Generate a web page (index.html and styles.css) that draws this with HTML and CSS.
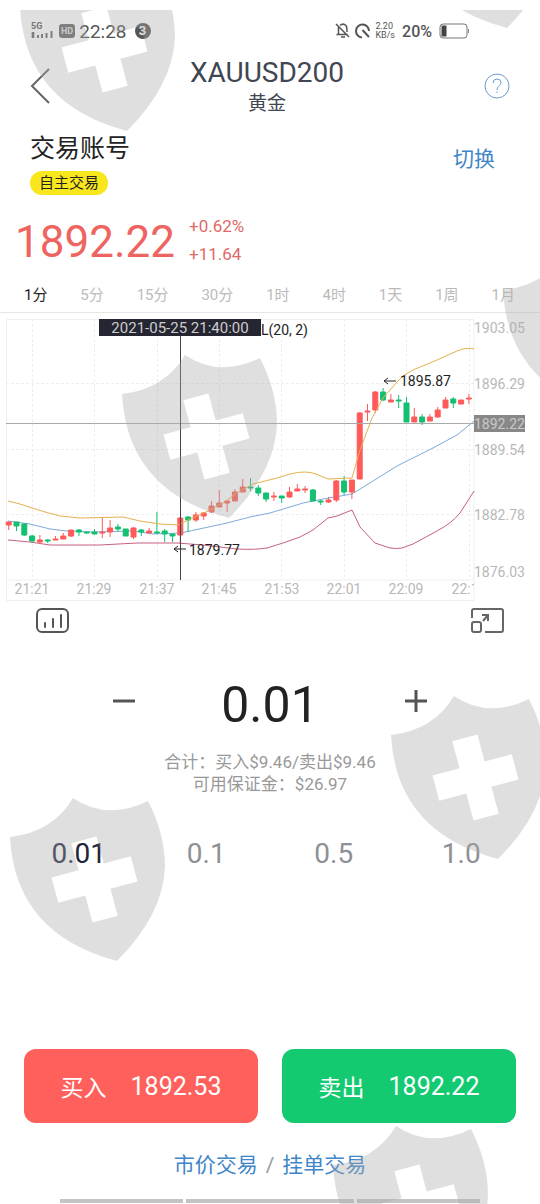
FILE: index.html
```html
<!DOCTYPE html>
<html lang="zh-CN">
<head>
<meta charset="utf-8">
<meta name="viewport" content="width=device-width, initial-scale=1">
<title>XAUUSD200 黄金</title>
<link rel="stylesheet" href="styles.css">
</head>
<body>
<div class="screen">
  <div class="status">
    <div class="status-side">
      <svg class="signal" width="24" height="18" viewBox="0 0 24 18" aria-hidden="true">
        <text x="0" y="7" class="signal-text">5G</text>
        <path d="M2 10v6M.5 11.500h3M.5 14.500h3M7 13v3M11 12v4M15.500 11v5M20.500 9v7" />
      </svg>
      <span class="hd">HD</span>
      <span class="clock">22:28</span>
      <span class="count">3</span>
    </div>
    <div class="status-side indicators">
      <svg width="16" height="18" viewBox="0 0 16 18" fill="none" stroke="#555" stroke-width="1.500" aria-hidden="true"><path d="M3.500 5v7.500H1.500h11M5 3.500Q8 .8 11 3.500Q12 5 12 10M1 2l13 13M6 15h4"/></svg>
      <svg width="18" height="18" viewBox="0 0 18 18" fill="none" stroke="#555" stroke-width="2" aria-hidden="true"><path d="M8 15.500A6.500 6.500 0 1 1 15 9M8.500 8l6.500 7"/></svg>
      <span class="speed">2.20<br>KB/s</span>
      <span class="percent">20%</span>
      <svg width="30" height="16" viewBox="0 0 30 16" aria-hidden="true"><rect x="1" y="1" width="27" height="14" rx="3" fill="none" stroke="#777"/><path d="M2.500 2.500h5v11h-5z" fill="#444"/><path d="M29.500 6v4" stroke="#888"/></svg>
    </div>
  </div>

  <header class="header">
    <button class="icon-button" aria-label="返回"><svg width="20" height="36" viewBox="0 0 20 36" fill="none" stroke="#666" stroke-width="2"><path d="M19 1 2 18l17 17"/></svg></button>
    <div class="heading"><h1>XAUUSD200</h1><p>黄金</p></div>
    <button class="icon-button" aria-label="帮助"><svg width="26" height="26" viewBox="0 0 26 26" fill="none" stroke="#6c9ccf"><circle cx="13" cy="13" r="12"/><path d="M9 10q0-4 4-4t4 3.500q0 2-2.200 3.500Q13 14.500 13 17M13 18.500v1.500"/></svg></button>
  </header>

  <section class="account">
    <div><h2>交易账号</h2><span class="tag">自主交易</span></div>
    <a class="switch" href="#">切换</a>
  </section>

  <section class="quote">
    <strong>1892.22</strong>
    <div class="change"><span>+0.62%</span><span>+11.64</span></div>
  </section>

  <nav class="tabs">
    <button class="active">1分</button><button>5分</button><button>15分</button><button>30分</button><button>1时</button><button>4时</button><button>1天</button><button>1周</button><button>1月</button>
  </nav>

  <svg class="chart" viewBox="0 313 540 290" role="img" aria-label="1分钟K线图">
    <defs><clipPath id="plot"><path d="M6 313h468v290H6z"/></clipPath></defs>
    <path class="frame" d="M6.500 600.500v-281h467.500v281zM6 580h468"/>
    <path class="grid" d="M32.500 319v261M94.500 319v261M157.500 319v261M219.500 319v261M281.500 319v261M344.500 319v261M406.500 319v261M469.500 319v261M6 383.500h468M6 449.500h468M6 514.500h468"/>
    <path class="band middle" d="M8 521 30 524 50 529 67 531 93 532 133 531 153 534 180 533 190 531 227 523 250 517 270 513 303 503 323 499 352 494 373 481 397 466 433 448 457 435 474 421"/>
    <path class="band lower" d="M8 540 30 542 50 545 100 545 137 543 177 543 203 545 237 549Q255 550 267 548L283 543 300 537 313 530 328 518 337 516 352 510 360 527 375 543 390 548Q397 549 402 548L413 544 437 531Q452 523 460 513L474 491"/>
    <g id="candles"></g>
    <path class="band upper" d="M8 501 20 504 32 508 45 512 60 516 80 518 123 517 140 521 160 524 178 525 190 519 204 513 223 503 237 493 253 484 277 478 290 474Q306 470 316 474L328 479 352 478 360 450 372 418 383 398 397 382Q402 375 413 370L437 360 457 351Q467 347 474 349"/>
    <path class="last" d="M6 423.500h468"/>
    <path class="cursor" d="M180.500 336v244"/>
    <text class="note" x="308" y="335" text-anchor="end">L(20, 2)</text>
    <path fill="#252632" d="M99 319h162v17H99z"/>
    <text class="date" x="180" y="333" text-anchor="middle">2021-05-25 21:40:00</text>
    <path class="arrow" d="M396 381h-12m4-3-4 3 4 3M186 549h-12m4-3-4 3 4 3"/>
    <text class="note" x="400" y="386">1895.87</text>
    <text class="note" x="189" y="555">1879.77</text>
    <path fill="#888" d="M474 415h51v17h-51z"/>
    <g class="axis">
      <text x="474" y="333">1903.05</text><text x="474" y="389">1896.29</text><text x="474" y="429" class="current">1892.22</text><text x="474" y="455">1889.54</text><text x="474" y="520">1882.78</text><text x="474" y="577">1876.03</text>
    </g>
    <g class="axis" text-anchor="middle" clip-path="url(#plot)">
      <text x="32" y="594">21:21</text><text x="94" y="594">21:29</text><text x="157" y="594">21:37</text><text x="219" y="594">21:45</text><text x="282" y="594">21:53</text><text x="344" y="594">22:01</text><text x="406" y="594">22:09</text><text x="469" y="594">22:17</text>
    </g>
  </svg>

  <div class="tools">
    <button class="icon-button" aria-label="指标"><svg width="34" height="26" viewBox="0 0 34 26" fill="none" stroke="#555" stroke-width="2"><rect x="1" y="2" width="31" height="23" rx="5"/><path d="M9 16v4M17 12v8M25 8v12" stroke-linecap="round"/></svg></button>
    <button class="icon-button" aria-label="全屏"><svg width="34" height="26" viewBox="0 0 34 26" fill="none" stroke="#666" stroke-width="2"><path d="M2 11V4q0-2 2-2h27q2 0 2 2v19q0 2-2 2H15"/><rect x="2" y="15" width="9" height="10" rx="2"/><path d="m13 14 5-6M12 8h6v6"/></svg></button>
  </div>

  <section class="stepper">
    <button class="icon-button" aria-label="减少"><svg width="24" height="24" viewBox="0 0 24 24" stroke="#555" stroke-width="3"><path d="M1 12h22"/></svg></button>
    <input aria-label="手数" value="0.01">
    <button class="icon-button" aria-label="增加"><svg width="24" height="24" viewBox="0 0 24 24" stroke="#555" stroke-width="3"><path d="M1 12h22M12 1v22"/></svg></button>
  </section>
  <div class="summary"><p>合计：买入$9.46/卖出$9.46</p><p>可用保证金：$26.97</p></div>
  <div class="sizes"><button class="active">0.01</button><button>0.1</button><button>0.5</button><button>1.0</button></div>

  <div class="actions">
    <button class="buy"><span>买入</span><span class="price">1892.53</span></button>
    <button class="sell"><span>卖出</span><span class="price">1892.22</span></button>
  </div>
  <div class="modes"><a href="#">市价交易</a><span>/</span><a href="#">挂单交易</a></div>
  <div class="homebar"><i></i><i></i><i></i></div>

  <svg class="shields" viewBox="0 10 540 1194" preserveAspectRatio="xMidYMin slice" aria-hidden="true">
    <defs>
      <mask id="cross" maskUnits="userSpaceOnUse" x="-5" y="-50" width="170" height="190">
        <path fill="#fff" d="M-5-50h170v190H-5z"/>
        <path fill="#000" transform="translate(84.500 42.500) rotate(-15)" d="M-13-41h26v28h28v26H13v28h-26V13h-28v-26h28z"/>
      </mask>
      <g id="mark"><path mask="url(#cross)" d="M0 0Q43-5 63-39Q97-16 138-36Q155-3 155 30Q153 78 107 124Q5 97 0 0Z"/></g>
    </defs>
    <use href="#mark" x="20" y="7"/><use href="#mark" x="400" y="-96"/><use href="#mark" x="122" y="394"/><use href="#mark" x="503" y="290"/><use href="#mark" x="391" y="735"/><use href="#mark" x="10" y="837"/><use href="#mark" x="333" y="1165"/>
  </svg>
</div>
<script src="script.js"></script>
</body>
</html>
```
FILE: styles.css
```css
* { box-sizing: border-box; }
body { margin: 0; background: #fff; color: #222; font-family: Roboto, "Noto Sans CJK SC", sans-serif; }
h1, h2, p { margin: 0; font-weight: 400; }
button { padding: 0; border: 0; background: none; color: inherit; font: inherit; }
a { color: #3f86c8; text-decoration: none; }
svg { display: block; }
.screen { position: relative; min-height: 100vh; padding-top: 18px; overflow: hidden; display: flex; flex-direction: column; }

.status { display: flex; justify-content: space-between; padding: 0 71px 0 31px; height: 26px; color: #555; }
.status-side { display: flex; align-items: center; gap: 4px; }
.indicators { gap: 3px; }
.signal path { stroke: #666; stroke-width: 2; fill: none; }
.signal-text { font-size: 9px; font-weight: 700; fill: #555; }
.hd { padding: 0 2px; border-radius: 3px; background: #666; color: #ddd; font-size: 9px; font-weight: 700; line-height: 14px; }
.clock { font-size: 19px; }
.count { width: 16px; margin-left: 4px; border-radius: 50%; background: #555; color: #eee; font-size: 13px; font-weight: 700; line-height: 16px; text-align: center; }
.speed { font-size: 9px; line-height: 9px; }
.percent { margin: 0 4px; font-size: 16px; font-weight: 500; }

.header { display: flex; align-items: center; justify-content: space-between; padding: 11px 30px 0; }
.icon-button { display: flex; align-items: center; }
.heading { text-align: center; color: #414652; }
.heading h1 { font-size: 28px; line-height: 36px; }
.heading p { font-size: 19px; line-height: 26px; }

.account { display: flex; justify-content: space-between; padding: 14px 45px 0 30px; }
.account h2 { font-size: 25px; line-height: 36px; margin-bottom: 4px; }
.tag { display: block; width: max-content; padding: 0 9px; border-radius: 12px; background: #f8e71c; font-size: 15px; line-height: 24px; }
.switch { margin-top: 12px; font-size: 21px; line-height: 32px; }

.quote { display: flex; align-items: center; gap: 14px; padding: 17px 15px 0; color: #ed6460; }
.quote strong { font-size: 44px; font-weight: 400; line-height: 56px; }
.change { display: grid; padding-bottom: 4px; font-size: 17px; line-height: 28px; color: #e06a66; }

.tabs { display: flex; justify-content: space-between; padding: 9px 25px 3px 24px; border-bottom: 1px solid #e6e6e6; color: #bbb; font-size: 15px; line-height: 28px; }
.tabs .active { color: #222; }

.chart { width: 100%; height: auto; }
.frame { fill: none; stroke: #efefef; }
.grid { stroke: #eee; stroke-dasharray: 3 2; }
.band { fill: none; stroke-width: 1; }
.upper { stroke: #e5b04d; }
.middle { stroke: #7ea9dc; }
.lower { stroke: #c8607f; }
.last { stroke: #aaa; }
.cursor { stroke: #444; }
.up { fill: #ff5b5b; stroke: #ff5b5b; }
.down { fill: #13c071; stroke: #13c071; }
.note { font-size: 14px; fill: #222; }
.date { font-size: 15px; fill: #ccc; }
.arrow { fill: none; stroke: #222; }
.axis { font-size: 14px; fill: #b8b8b8; }
.current { fill: #c8c8c8; }

.tools { display: flex; justify-content: space-between; padding: 4px 36px 0; }
.stepper { display: flex; align-items: center; justify-content: center; gap: 42px; padding-top: 40px; }
.stepper .icon-button { padding-bottom: 8px; }
.stepper input { width: 184px; height: 64px; margin: 0; padding: 0; border: 0; background: none; color: #222; font: inherit; font-size: 50px; text-align: center; }
.summary { padding-top: 14px; color: #999; font-size: 17px; line-height: 22px; text-align: center; }
.sizes { display: grid; grid-template-columns: repeat(4, 1fr); padding: 39px 15px 0; color: #8d9095; font-size: 28px; line-height: 40px; }
.sizes .active { color: #22253a; }

.actions { display: grid; grid-template-columns: 1fr 1fr; gap: 24px; margin-top: auto; padding: 0 24px; color: #fff; font-size: 23px; }
.actions button { display: flex; align-items: center; justify-content: center; gap: 24px; height: 74px; border-radius: 12px; }
.price { font-size: 25px; }
.buy { background: #ff605c; }
.sell { background: #13ca71; }
.modes { display: flex; justify-content: center; gap: 8px; padding: 27px 0 19px; color: #999; font-size: 21px; line-height: 30px; }
.homebar { display: grid; grid-template-columns: 123fr 169fr 123fr; gap: 3px; padding: 0 60px 1px; }
.homebar i { height: 4px; background: #c4c4c4; }

.shields { position: absolute; top: 10px; left: 0; width: 100%; height: calc(100% - 10px); fill: #aaa; opacity: .37; pointer-events: none; }
```
FILE: script.js
```js
// Each candle: direction, high, body top, body bottom, low (chart units)
const candles = [
  ['up',522,522,525,530],['down',522,522,526,531],['down',523,524,535,536],['down',535,536,541,543],['up',535,540,542,544],
  ['down',539,540,541,543],['up',536,539,540,540],['up',533,536,539,539],['up',530,530,536,537],['down',529,530,532,536],
  ['down',532,532,533,534],['down',529,532,534,534],['up',517,532,533,538],['up',520,528,532,537],['down',524,527,529,532],
  ['down',529,529,536,536],['up',527,528,537,539],['down',529,530,532,536],['up',528,531,533,533],['down',512,532,533,534],
  ['down',529,531,534,542],['down',534,534,536,542],['up',517,518,535,543],['down',516,517,520,532],['up',512,515,520,522],
  ['up',512,513,516,520],['up',501,506,512,513],['up',490,503,507,507],['up',501,501,503,512],['up',489,492,501,501],
  ['up',479,487,492,492],['down',478,487,488,491],['down',485,488,493,496],['down',493,493,499,502],['up',492,496,497,501],
  ['down',496,496,498,503],['up',487,492,497,498],['up',484,489,491,491],['up',486,489,490,493],['down',489,490,501,501],
  ['down',500,501,502,505],['up',497,500,502,503],['up',480,481,500,502],['down',476,481,492,495],['up',480,480,492,499],
  ['up',412,413,479,479],['up',404,411,412,421],['up',391,392,410,413],['down',388,392,400,401],['up',394,400,402,402],
  ['down',395,400,401,408],['down',397,403,422,422],['up',408,417,422,422],['down',414,417,422,425],['up',414,417,421,421],
  ['up',407,410,417,418],['up',397,400,408,408],['down',397,399,403,408],['up',400,400,404,404],['up',394,398,399,404]
];
const layer = document.getElementById('candles');
candles.forEach(([dir, high, top, bottom, low], i) => {
  const x = 8.7 + 7.8 * i;
  const path = document.createElementNS('http://www.w3.org/2000/svg', 'path');
  path.setAttribute('class', dir);
  path.setAttribute('d', `M${x} ${high}V${low}M${x - 2.5} ${top}h5V${bottom}h-5z`);
  layer.append(path);
});
```
